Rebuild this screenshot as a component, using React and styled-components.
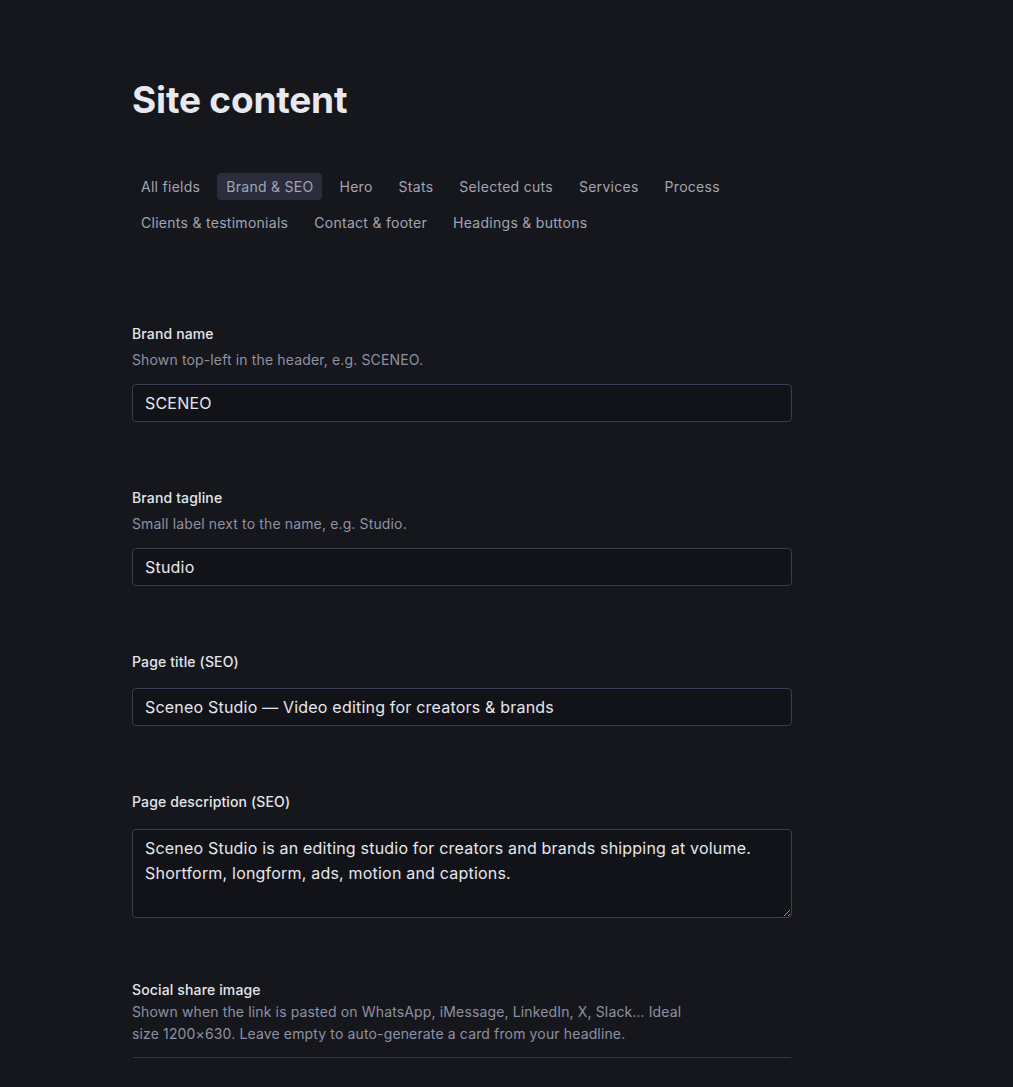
import React from "react";
import styled, { createGlobalStyle } from "styled-components";

const Global = createGlobalStyle`
  html, body { margin: 0; padding: 0; background: #16171c; }
  body { font-family: Inter, "Noto Sans", sans-serif; color: #e6e7ec; -webkit-font-smoothing: antialiased; }
  * { box-sizing: border-box; }
`;

const Page = styled.div`
  min-height: 1087px;
  background: #16171c;
  padding: 78px 0 0 132px;
`;

const Main = styled.main`
  width: 660px;
`;

const Title = styled.h1`
  margin: 0;
  font-size: 37px;
  line-height: 44px;
  font-weight: 700;
  letter-spacing: -0.005em;
  color: #e8e9ee;
`;

const Tabs = styled.nav`
  display: flex;
  flex-wrap: wrap;
  column-gap: 8px;
  row-gap: 9px;
  margin-top: 51px;
`;

const Tab = styled.button`
  border: 0;
  font-family: inherit;
  font-size: 14px;
  letter-spacing: 0.02em;
  line-height: 27px;
  height: 27px;
  padding: 0 9px;
  border-radius: 4px;
  color: #a2a5b4;
  background: ${(p) => (p.$active ? "#2b2d3e" : "transparent")};
  cursor: pointer;
`;

const Fields = styled.div`
  display: flex;
  flex-direction: column;
  margin-top: 88px;
`;

const Field = styled.div`
  display: flex;
  flex-direction: column;
  margin-top: ${(p) => p.$space ?? 66}px;
  &:first-child {
    margin-top: 0;
  }
`;

const Label = styled.label`
  font-size: 14px;
  line-height: 20px;
  font-weight: 500;
  letter-spacing: 0.01em;
  color: #e4e5ea;
`;

const Hint = styled.p`
  margin: ${(p) => (p.$tight ? "1px" : "6px")} 0 0;
  font-size: 14px;
  letter-spacing: 0.01em;
  line-height: ${(p) => (p.$tight ? "22px" : "20px")};
  color: #8e91a3;
  max-width: 575px;
`;

const Control = styled.div`
  margin-top: ${(p) => (p.$hint ? "14px" : "16px")};
`;

const Input = styled.input`
  display: block;
  width: 660px;
  height: 38px;
  padding: 0 12px;
  font-family: inherit;
  font-size: 16px;
  letter-spacing: 0.2px;
  color: #e6e7ec;
  background: #121319;
  border: 1px solid #3a3d55;
  border-radius: 4px;
  outline: none;
`;

const TextArea = styled.textarea`
  display: block;
  width: 660px;
  height: 89px;
  margin-top: 1px;
  padding: 6px 12px;
  font-family: inherit;
  font-size: 16px;
  letter-spacing: 0.2px;
  line-height: 25px;
  color: #e6e7ec;
  background: #121319;
  border: 1px solid #3a3d55;
  border-radius: 4px;
  outline: none;
  resize: vertical;
`;

const Divider = styled.div`
  margin-top: 12px;
  height: 1px;
  width: 658px;
  margin-left: 1px;
  background: #32344b;
`;

const tabs = [
  "All fields",
  "Brand & SEO",
  "Hero",
  "Stats",
  "Selected cuts",
  "Services",
  "Process",
  "Clients & testimonials",
  "Contact & footer",
  "Headings & buttons",
];

export default function App() {
  return (
    <Page>
      <Global />
      <Main>
        <Title>Site content</Title>
        <Tabs>
          {tabs.map((t) => (
            <Tab key={t} $active={t === "Brand & SEO"}>
              {t}
            </Tab>
          ))}
        </Tabs>
        <Fields>
          <Field>
            <Label>Brand name</Label>
            <Hint>Shown top-left in the header, e.g. SCENEO.</Hint>
            <Control $hint>
              <Input defaultValue="SCENEO" />
            </Control>
          </Field>
          <Field>
            <Label>Brand tagline</Label>
            <Hint>Small label next to the name, e.g. Studio.</Hint>
            <Control $hint>
              <Input defaultValue="Studio" />
            </Control>
          </Field>
          <Field>
            <Label>Page title (SEO)</Label>
            <Control>
              <Input defaultValue="Sceneo Studio — Video editing for creators & brands" />
            </Control>
          </Field>
          <Field>
            <Label>Page description (SEO)</Label>
            <Control>
              <TextArea defaultValue={"Sceneo Studio is an editing studio for creators and brands shipping at volume. Shortform, longform, ads, motion and captions."} />
            </Control>
          </Field>
          <Field $space={62}>
            <Label>Social share image</Label>
            <Hint $tight>
              Shown when the link is pasted on WhatsApp, iMessage, LinkedIn, X, Slack… Ideal size 1200×630. Leave empty to auto-generate a card from your headline.
            </Hint>
            <Divider />
          </Field>
        </Fields>
      </Main>
    </Page>
  );
}
